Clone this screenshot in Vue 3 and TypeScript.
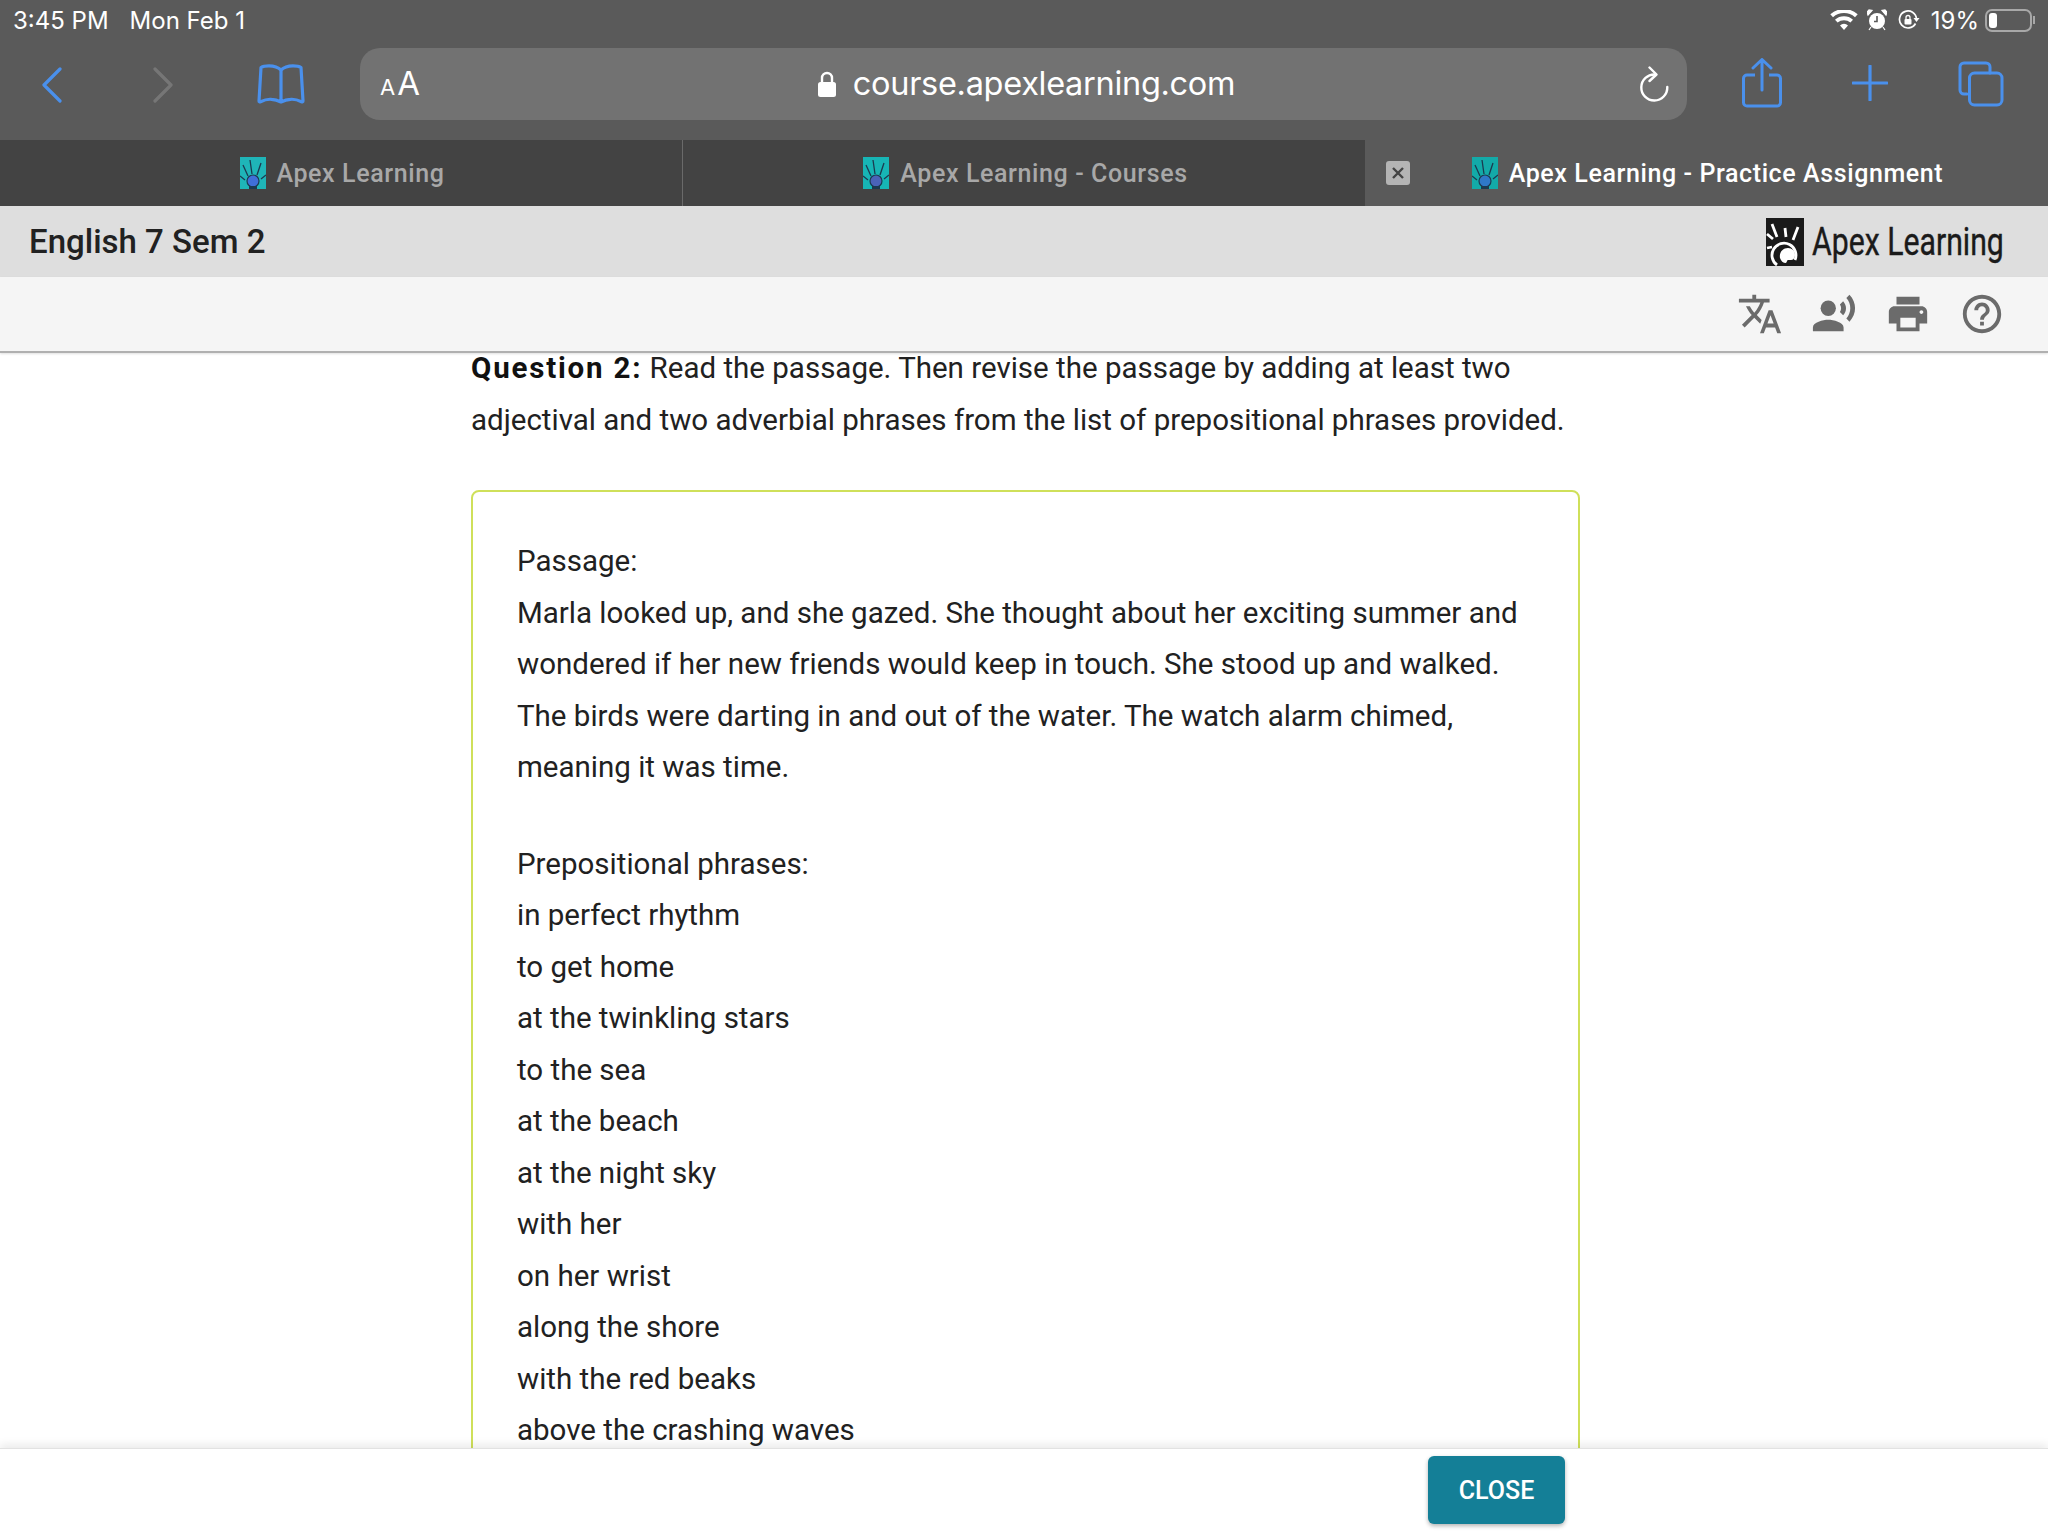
<script setup lang="ts">
const tabs = [
  { title: "Apex Learning", active: false, icon: "#1fb5b8", head: "#3f6fd8" },
  { title: "Apex Learning - Courses", active: false, icon: "#17b5b5", head: "#4a63b8" },
  { title: "Apex Learning - Practice Assignment", active: true, icon: "#13aaa8", head: "#2f78c8" },
];

const passage =
  "Marla looked up, and she gazed. She thought about her exciting summer and wondered if her new friends would keep in touch. She stood up and walked. The birds were darting in and out of the water. The watch alarm chimed, meaning it was time.";

const phrases = [
  "in perfect rhythm",
  "to get home",
  "at the twinkling stars",
  "to the sea",
  "at the beach",
  "at the night sky",
  "with her",
  "on her wrist",
  "along the shore",
  "with the red beaks",
  "above the crashing waves",
];
</script>

<template>
  <div class="page">
    <div class="status-bar">
      <span class="time">3:45 PM</span>
      <span class="date">Mon Feb 1</span>
      <span class="status-right">
        <svg class="st-wifi" viewBox="0 0 28 20" width="28" height="20">
          <path d="M14 20l-4-4.600a6 6 0 0 1 8 0zM7.600 12.600L5 9.700a13.500 13.500 0 0 1 18 0l-2.600 2.900a9.600 9.600 0 0 0-12.800 0zM3 7.300L0.300 4.300a20.500 20.500 0 0 1 27.400 0L25 7.300a16.500 16.500 0 0 0-22 0z" fill="#fff" />
        </svg>
        <svg class="st-alarm" viewBox="0 0 20 22" width="20" height="22">
          <circle cx="10" cy="12" r="8" fill="#fff" />
          <path d="M10 7v5.500h-3" fill="none" stroke="#5a5a5a" stroke-width="1.600" />
          <path d="M1 6l4-4.500-3-.5-2 2zM19 6l-4-4.500 3-.5 2 2zM4 18l-2 3M16 18l2 3" fill="#fff" stroke="#fff" stroke-width="1.200" />
        </svg>
        <svg class="st-rotate" viewBox="0 0 22 20" width="22" height="20">
          <path d="M17.500 13.500A8.500 8.500 0 1 1 18.500 9" fill="none" stroke="#fff" stroke-width="1.700" />
          <path d="M15.500 8h6l-3 4z" fill="#fff" />
          <rect x="6.500" y="9" width="7" height="5.500" rx="1" fill="#fff" />
          <path d="M8 9V7.500a2 2 0 0 1 4 0V9" fill="none" stroke="#fff" stroke-width="1.300" />
        </svg>
        <span class="pct">19%</span>
        <span class="battery"><span class="battery-level"></span></span>
        <span class="battery-nub"></span>
      </span>
    </div>

    <div class="toolbar">
      <svg class="ic-back" viewBox="0 0 21 36" width="21" height="36">
        <path d="M19 2L3 18l16 16" fill="none" stroke="#4a90ec" stroke-width="3.200" stroke-linecap="round" stroke-linejoin="round" />
      </svg>
      <svg class="ic-forward" viewBox="0 0 21 36" width="21" height="36">
        <path d="M2 2l16 16L2 34" fill="none" stroke="#767676" stroke-width="3.200" stroke-linecap="round" stroke-linejoin="round" />
      </svg>
      <svg class="ic-book" viewBox="0 0 48 40" width="48" height="40">
        <path d="M24 6C21 3 17 1.800 12 1.800 8 1.800 5.500 2.500 4 3.500L2 37c0 .8.700 1 1.500.7C7 36 11 35 14.500 35.300 18 35.500 21 36.500 24 38c3-1.500 6-2.500 9.500-2.700C37 35 41 36 44.500 37.700c.8.300 1.500.1 1.500-.7L44 3.500C42.500 2.500 40 1.800 36 1.800 31 1.800 27 3 24 6zm0 0v32" fill="none" stroke="#4a90ec" stroke-width="3.200" stroke-linejoin="round" />
      </svg>

      <div class="address">
        <span class="aa"><small>A</small>A</span>
        <span class="url">
          <svg viewBox="0 0 18 26" width="18" height="26">
            <path d="M4 12V7a5 5 0 0 1 10 0v5" fill="none" stroke="#fff" stroke-width="2.400" />
            <rect x="0" y="11" width="18" height="15" rx="2.500" fill="#fff" />
          </svg>
          course.apexlearning.com
        </span>
        <svg class="reload" viewBox="0 0 30 36" width="30" height="36">
          <path d="M16 8.500A13 13 0 1 0 28.300 21" fill="none" stroke="#fff" stroke-width="2.400" stroke-linecap="round" />
          <path d="M10.500 1.500L17.500 8.500l-7 6.500" fill="none" stroke="#fff" stroke-width="2.400" stroke-linecap="round" stroke-linejoin="round" />
        </svg>
      </div>

      <svg class="ic-share" viewBox="0 0 40 50" width="40" height="50">
        <path d="M13 17H5a3.500 3.500 0 0 0-3.500 3.500v24A3.500 3.500 0 0 0 5 48h30a3.500 3.500 0 0 0 3.500-3.500v-24A3.500 3.500 0 0 0 35 17h-8" fill="none" stroke="#4a90ec" stroke-width="3" />
        <path d="M20 32V2M11 10l9-8.500 9 8.500" fill="none" stroke="#4a90ec" stroke-width="3" stroke-linecap="round" stroke-linejoin="round" />
      </svg>
      <svg class="ic-plus" viewBox="0 0 36 36" width="36" height="36">
        <path d="M18 1v34M1 18h34" fill="none" stroke="#4a90ec" stroke-width="3.200" stroke-linecap="round" />
      </svg>
      <svg class="ic-tabs" viewBox="0 0 46 46" width="46" height="46">
        <path d="M9 33H6a4 4 0 0 1-4-4V6a4 4 0 0 1 4-4h22a4 4 0 0 1 4 4v6" fill="none" stroke="#4a90ec" stroke-width="3" stroke-linecap="round" />
        <rect x="11.500" y="12" width="32.500" height="32" rx="5" fill="none" stroke="#4a90ec" stroke-width="3" />
      </svg>
    </div>

    <div class="tabs">
      <div v-for="tab in tabs" :key="tab.title" class="tab" :class="{ active: tab.active }">
        <span v-if="tab.active" class="tab-close">
          <svg viewBox="0 0 24 24" width="24" height="24">
            <path d="M7 7l10 10M17 7L7 17" stroke="#444" stroke-width="2.400" />
          </svg>
        </span>
        <svg class="favicon" viewBox="0 0 26 32" width="26" height="32">
          <rect width="26" height="32" :fill="tab.icon" />
          <path d="M12 17L10 3M8 19L3 8M17 18L21 6M5 23L0 19M21 22l5-4" stroke="#1c3a50" stroke-width="1.300" />
          <circle cx="13" cy="24" r="6" :fill="tab.head" stroke="#1c3a50" stroke-width="1.200" />
          <path d="M9 32v-3h8v3z" fill="#1c3a50" />
        </svg>
        <span class="tab-title">{{ tab.title }}</span>
      </div>
    </div>

    <header class="course-bar">
      <h1>English 7 Sem 2</h1>
      <div class="logo">
        <svg viewBox="0 0 38 48" width="38" height="48">
          <rect width="38" height="48" fill="#1a1a1a" />
          <path d="M6 6l5 13M19 10l1 9M32 9l-5 13M1 16l6 5M1 30l5-1" stroke="#fff" stroke-width="2.800" />
          <path d="M11 47A12 12 0 1 1 29 42" fill="none" stroke="#fff" stroke-width="2.800" />
          <path d="M14 40c-1-6 3-10 8-10 4 0 7 3 7 7 0 3-2 5-4 5h-3c-1 0-1 2-2 3-3 0-5-2-6-5z" fill="#fff" />
        </svg>
        <span class="logo-text"><span>Apex Learning</span></span>
      </div>
    </header>

    <div class="tools">
      <svg viewBox="0 0 24 24" width="46" height="46">
        <path d="M12.870 15.070l-2.540-2.510.03-.03c1.740-1.940 2.980-4.170 3.710-6.530H17V4h-7V2H8v2H1v1.990h11.170C11.500 7.920 10.440 9.750 9 11.350 8.070 10.320 7.300 9.190 6.690 8h-2c.73 1.630 1.730 3.170 2.980 4.560l-5.090 5.020L4 19l5-5 3.110 3.110.76-2.040zM18.500 10h-2L12 22h2l1.120-3h4.750L21 22h2l-4.500-12zm-2.620 7l1.620-4.330L19.120 17h-3.240z" />
      </svg>
      <svg viewBox="0 0 24 24" width="46" height="46">
        <circle cx="9" cy="9" r="4" />
        <path d="M9 15c-2.670 0-8 1.340-8 4v2h16v-2c0-2.660-5.330-4-8-4zm7.760-9.640l-1.680 1.690c.84 1.180.84 2.710 0 3.890l1.680 1.690c2.020-2.020 2.020-5.070 0-7.270zM20.070 2l-1.630 1.630c2.770 3.020 2.770 7.560 0 10.740L20.070 16c3.900-3.890 3.910-9.950 0-14z" />
      </svg>
      <svg viewBox="0 0 24 24" width="46" height="46">
        <path d="M19 8H5c-1.660 0-3 1.340-3 3v6h4v4h12v-4h4v-6c0-1.660-1.340-3-3-3zm-3 11H8v-5h8v5zm3-7c-.55 0-1-.45-1-1s.45-1 1-1 1 .45 1 1-.45 1-1 1zm-1-9H6v4h12V3z" />
      </svg>
      <svg viewBox="0 0 24 24" width="46" height="46">
        <path d="M11 18h2v-2h-2v2zm1-16C6.480 2 2 6.480 2 12s4.480 10 10 10 10-4.480 10-10S17.520 2 12 2zm0 18c-4.410 0-8-3.590-8-8s3.590-8 8-8 8 3.590 8 8-3.590 8-8 8zm0-14c-2.210 0-4 1.790-4 4h2c0-1.100.9-2 2-2s2 .9 2 2c0 2-3 1.750-3 5h2c0-2.250 3-2.500 3-5 0-2.210-1.790-4-4-4z" />
      </svg>
    </div>

    <main class="content">
      <p class="question">
        <strong>Question 2:</strong> Read the passage. Then revise the passage by adding at least two adjectival and two adverbial phrases from the list of prepositional phrases provided.
      </p>
      <section class="answer-box">
        <p class="passage">Passage:<br />{{ passage }}</p>
        <p class="list-title">Prepositional phrases:</p>
        <div v-for="item in phrases" :key="item">{{ item }}</div>
      </section>
    </main>

    <footer class="footer">
      <button class="close">CLOSE</button>
    </footer>
  </div>
</template>

<style scoped>
.page {
  width: 2048px;
  height: 1536px;
  display: flex;
  flex-direction: column;
  overflow: hidden;
  background: #fff;
  font-family: Roboto, "Liberation Sans", sans-serif;
  color: #212121;
}

.status-bar {
  height: 45px;
  flex: none;
  display: flex;
  align-items: center;
  padding: 0 13px 5px;
  background: #5a5a5a;
  color: #fff;
  font-family: Inter, Roboto, sans-serif;
  font-size: 24px;
  box-sizing: border-box;
}

.date {
  margin-left: 21px;
}

.status-right {
  margin-left: auto;
  display: flex;
  align-items: center;
}

.st-alarm {
  margin-left: 9px;
}

.st-rotate {
  margin-left: 11px;
}

.pct {
  margin-left: 11px;
  font-size: 24px;
}

.battery {
  width: 47px;
  height: 23px;
  margin-left: 6px;
  box-sizing: border-box;
  border: 2px solid #a8a8a8;
  border-radius: 7px;
  padding: 2px;
  display: block;
}

.battery-level {
  display: block;
  width: 8px;
  height: 100%;
  background: #fff;
  border-radius: 3px;
}

.battery-nub {
  width: 2px;
  height: 8px;
  margin-left: 1px;
  background: #a8a8a8;
}

.toolbar {
  height: 95px;
  flex: none;
  display: flex;
  align-items: center;
  background: #5a5a5a;
}

.ic-back {
  margin-left: 41px;
  margin-bottom: 15px;
}

.ic-forward {
  margin-left: 91px;
  margin-bottom: 15px;
}

.ic-book {
  margin-left: 83px;
  margin-bottom: 17px;
}

.address {
  width: 1327px;
  height: 72px;
  margin: 0 0 18px 55px;
  border-radius: 20px;
  background: #727272;
  display: grid;
  grid-template-columns: 1fr auto 1fr;
  align-items: center;
  color: #fff;
  font-family: Inter, Roboto, sans-serif;
}

.aa {
  padding-left: 20px;
  font-size: 33px;
  line-height: 1;
}

.aa small {
  font-size: 22px;
  margin-right: 2px;
}

.url {
  display: flex;
  align-items: center;
  gap: 17px;
  margin-left: 6px;
  font-size: 32.5px;
  letter-spacing: -0.3px;
}

.reload {
  justify-self: end;
  margin-right: 18px;
}

.ic-share {
  margin-left: 55px;
  margin-bottom: 20px;
}

.ic-plus {
  margin-left: 70px;
  margin-bottom: 20px;
}

.ic-tabs {
  margin-left: 70px;
  margin-bottom: 18px;
}

.tabs {
  height: 66px;
  flex: none;
  display: flex;
  background: #434343;
}

.tab {
  position: relative;
  width: 683px;
  flex: none;
  display: flex;
  align-items: center;
  justify-content: center;
  gap: 11px;
  padding-left: 2px;
  box-sizing: border-box;
  color: #a8a8a8;
  font-size: 25px;
  font-weight: 500;
  letter-spacing: 0.6px;
}

.tab:first-child {
  border-right: 1px solid #6a6a6a;
}

.tab.active {
  margin-left: -1px;
  background: #5a5a5a;
  color: #fff;
}

.tab-close {
  position: absolute;
  left: 21px;
  top: 21px;
  width: 24px;
  height: 24px;
  background: #b4b4b4;
  border-radius: 3px;
}

.course-bar {
  height: 71px;
  flex: none;
  display: flex;
  align-items: center;
  justify-content: space-between;
  padding: 0 45px 0 29px;
  background: #dedede;
}

.course-bar h1 {
  margin: 0;
  font-size: 33px;
  font-weight: 500;
  color: #212121;
}

.logo {
  display: flex;
  align-items: center;
  gap: 8px;
}

.logo-text {
  display: block;
  width: 191px;
  font-size: 38px;
  line-height: 48px;
  color: #1a1a1a;
  white-space: nowrap;
}

.logo-text span {
  display: inline-block;
  transform: scaleX(0.795);
  transform-origin: left center;
  -webkit-text-stroke: 0.4px #1a1a1a;
}

.tools {
  position: relative;
  z-index: 2;
  height: 76px;
  flex: none;
  display: flex;
  align-items: center;
  justify-content: flex-end;
  gap: 28px;
  padding-right: 43px;
  box-sizing: border-box;
  background: #f5f5f5;
  border-bottom: 2px solid #b0b0b0;
  box-shadow: 0 1px 2px rgba(0, 0, 0, 0.12);
}

.tools svg {
  fill: #6b6b6b;
}

.content {
  flex: 1;
  min-height: 0;
  overflow: hidden;
  padding-left: 471px;
  font-size: 29.5px;
  line-height: 51.5px;
  color: #212121;
}

.question {
  width: 1110px;
  margin: -10px 0 44px;
}

.question strong {
  font-weight: 700;
  letter-spacing: 1.8px;
  color: #111;
}

.answer-box {
  width: 1109px;
  box-sizing: border-box;
  padding: 44px 44px 120px;
  border: 2px solid #cfe05a;
  border-radius: 8px;
}

.passage {
  margin: 0 0 45px;
}

.list-title {
  margin: 0;
}

.footer {
  position: relative;
  height: 88px;
  flex: none;
  display: flex;
  justify-content: flex-end;
  padding: 7px 483px 0 0;
  box-sizing: border-box;
  background: #fff;
  border-top: 1px solid #e2e2e2;
  box-shadow: 0 -4px 8px rgba(0, 0, 0, 0.08);
}

.close {
  width: 137px;
  height: 68px;
  border: none;
  border-radius: 6px;
  background: #147f97;
  color: #fff;
  font-family: Roboto, sans-serif;
  font-size: 25px;
  font-weight: 500;
  box-shadow: 0 2px 4px rgba(0, 0, 0, 0.3);
}
</style>
